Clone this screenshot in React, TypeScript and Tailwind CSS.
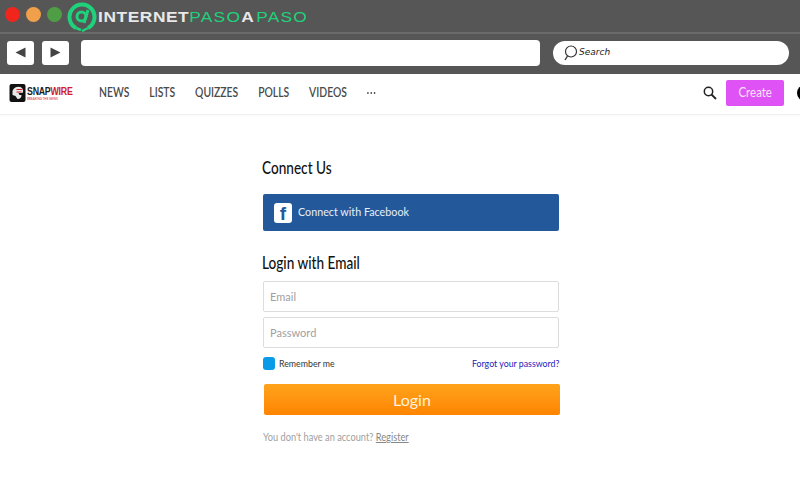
const lato = "font-['Lato','Liberation_Sans',sans-serif]";
const squeeze = "inline-block origin-left scale-x-[0.88] whitespace-nowrap";
const heading = "inline-block origin-left scale-x-[0.825] whitespace-nowrap -ml-[1px]";
const placeholder = "inline-block origin-left scale-x-[0.92] whitespace-nowrap";

function Chrome() {
  return (
    <div className="bg-[#565656]">
      <div className="h-[34px] flex items-center pl-[5px] gap-[6px] border-b-2 border-[#6a6a6a]">
        <span className="w-[15px] h-[15px] rounded-full bg-[#f0251c] -mt-[4px]" />
        <span className="w-[15px] h-[15px] rounded-full bg-[#f0a04a] -mt-[4px]" />
        <span className="w-[15px] h-[15px] rounded-full bg-[#4f9e45] -mt-[4px]" />
        <svg width="30" height="30" viewBox="0 0 30 30" className="-ml-[1px] mt-[1px]">
          <path d="M9 26 A12.5 12.5 0 1 1 21 26" fill="none" stroke="#1fd17a" strokeWidth="4" />
          <path d="M9 26 L14 28 M21 26 L15 29" stroke="#1fd17a" strokeWidth="2.5" />
          <circle cx="14.5" cy="14.5" r="4.5" fill="none" stroke="#1fd17a" strokeWidth="3" />
          <path d="M21 8 L17 21" stroke="#1fd17a" strokeWidth="3" />
        </svg>
        <div className="font-['Liberation_Sans',sans-serif] text-[15.5px] leading-none -ml-[5px] mt-[2px] whitespace-nowrap origin-left scale-x-[1.12]">
          <span className="text-[#e8e8e8] font-bold tracking-[0.5px]">INTERNET</span>
          <span className="text-[#1fd17a] tracking-[1.1px]">PASO</span>
          <span className="text-[#e8e8e8] font-bold tracking-[2.2px]">A</span>
          <span className="text-[#1fd17a] tracking-[1.1px]">PASO</span>
        </div>
      </div>
      <div className="h-[40px] flex items-center pl-[7px] pb-[3px]">
        <div className="w-[27px] h-[24px] bg-white rounded-[3px] flex items-center justify-center">
          <svg width="11" height="11" viewBox="0 0 11 11"><path d="M0.5 5.5 L10.5 0.5 V10.5 Z" fill="#444" /></svg>
        </div>
        <div className="w-[27px] h-[24px] bg-white rounded-[3px] ml-[8px] flex items-center justify-center">
          <svg width="11" height="11" viewBox="0 0 11 11"><path d="M10.5 5.5 L0.5 0.5 V10.5 Z" fill="#444" /></svg>
        </div>
        <div className="w-[459px] h-[26px] bg-white rounded-[4px] ml-[12px]" />
        <div className="w-[236px] h-[24px] bg-white rounded-full ml-[13px] flex items-center pl-[10px] gap-[1px]">
          <svg width="15" height="16" viewBox="0 0 15 16">
            <circle cx="8" cy="6.5" r="5.5" fill="none" stroke="#333" strokeWidth="1.2" />
            <path d="M4.5 11 L2 15" stroke="#333" strokeWidth="1.4" />
          </svg>
          <span className="font-['DejaVu_Sans',sans-serif] italic text-[9px] text-[#222]">Search</span>
        </div>
      </div>
    </div>
  );
}

function Nav() {
  return (
    <div className={`h-[41px] flex items-center bg-white border-b border-[#f0f0f0] shadow-[0_1px_2px_rgba(0,0,0,0.03)] overflow-hidden pb-[2px] ${lato}`}>
      <div className="flex items-center ml-[9px] w-[90px] shrink-0">
        <svg width="17" height="18" viewBox="0 0 16 18">
          <rect width="16" height="18" rx="2" fill="#111" />
          <path d="M3 7 Q5 2 11 3 Q15 5 13 9 L9 9 L10 11 L12 11 Q12 15 8 15 L6 12 L3 11 Z" fill="#e8e8e8" />
          <path d="M7 5.5 H13 M7 8 H12" stroke="#d0212a" strokeWidth="1.2" />
        </svg>
        <div className="flex flex-col ml-[1px]">
          <span className="font-['Liberation_Sans',sans-serif] font-bold text-[11px] leading-[11px] tracking-[-0.3px] scale-x-[0.8] origin-left whitespace-nowrap">
            <span className="text-[#1c1c1c]">SNAP</span><span className="text-[#d0202a]">WIRE</span>
          </span>
          <span className="text-[3px] leading-[3px] mt-[1px] text-[#d0202a] whitespace-nowrap">BREAKING THE NEWS</span>
        </div>
      </div>
      <div className="flex items-center text-[12.5px] font-semibold text-[#4a4a4a] gap-[24px] origin-left scale-x-[0.83]">
        <span>NEWS</span>
        <span>LISTS</span>
        <span>QUIZZES</span>
        <span>POLLS</span>
        <span>VIDEOS</span>
        <span className="flex gap-[2px]">
          <i className="w-[2px] h-[2px] rounded-full bg-[#444]" />
          <i className="w-[2px] h-[2px] rounded-full bg-[#444]" />
          <i className="w-[2px] h-[2px] rounded-full bg-[#444]" />
        </span>
      </div>
      <div className="ml-auto flex items-center">
        <svg width="14" height="14" viewBox="0 0 14 14">
          <circle cx="5.5" cy="5.5" r="4.2" fill="none" stroke="#222" strokeWidth="1.5" />
          <path d="M8.5 8.5 L13 13" stroke="#222" strokeWidth="1.8" />
        </svg>
        <div className="w-[58px] h-[26px] ml-[9px] bg-[#df52f5] rounded-[2px] flex items-center justify-center text-[#f6e6fb] text-[12.5px]">
          <span className="inline-block scale-x-[0.92]">Create</span>
        </div>
        <div className="w-[16px] h-[16px] rounded-full bg-black ml-[13px] -mr-[13px]" />
      </div>
    </div>
  );
}

function LoginForm() {
  return (
    <div className={`w-[296px] ml-[263px] ${lato}`}>
      <h2 className="text-[16.5px] leading-[20px] font-medium text-[#111] mt-[43px]">
        <span className={heading}>Connect Us</span>
      </h2>
      <div className="h-[37px] mt-[16px] bg-[#23589a] rounded-[2px] flex items-center pl-[11px] text-[#e8eef6] text-[12px]">
        <div className="w-[18px] h-[20px] bg-white rounded-[3px] flex items-end justify-center overflow-hidden">
          <span className="font-['Liberation_Sans',sans-serif] font-bold text-[19px] leading-[19px] text-[#23589a]">f</span>
        </div>
        <span className="ml-[6px] -mt-[1px] inline-block origin-left scale-x-[0.895] whitespace-nowrap">Connect with Facebook</span>
      </div>
      <h2 className="text-[16.5px] leading-[20px] font-medium text-[#111] mt-[22px]">
        <span className={heading}>Login with Email</span>
      </h2>
      <div className="h-[31px] mt-[8px] border border-[#dcdcdc] rounded-[2px] flex items-center pl-[6px] text-[12px] text-[#a0a0a0]">
        <span className={placeholder}>Email</span>
      </div>
      <div className="h-[31px] mt-[5px] border border-[#dcdcdc] rounded-[2px] flex items-center pl-[6px] text-[12px] text-[#a0a0a0]">
        <span className={placeholder}>Password</span>
      </div>
      <div className="flex items-center justify-between mt-[8px] h-[14px] text-[10px]">
        <div className="flex items-center">
          <span className="w-[12px] h-[13px] bg-[#0a9be8] rounded-[3px]" />
          <span className={`ml-[4px] text-[#333] ${squeeze}`}>Remember me</span>
        </div>
        <span className="inline-block origin-right scale-x-[0.88] whitespace-nowrap text-[#2222bb]">Forgot your password?</span>
      </div>
      <div className="h-[31px] mt-[14px] ml-[1px] -mr-[1px] rounded-[2px] bg-gradient-to-b from-[#ffa31a] to-[#ff8400] flex items-center justify-center text-[#fff3dc] text-[16px]">
        Login
      </div>
      <div className="mt-[15px] text-[10.5px] text-[#a0a0a0]">
        <span className={squeeze}>
          You don't have an account? <span className="underline text-[#888]">Register</span>
        </span>
      </div>
    </div>
  );
}

export default function App() {
  return (
    <div className="w-[800px] h-[500px] bg-white overflow-hidden">
      <Chrome />
      <Nav />
      <LoginForm />
    </div>
  );
}
